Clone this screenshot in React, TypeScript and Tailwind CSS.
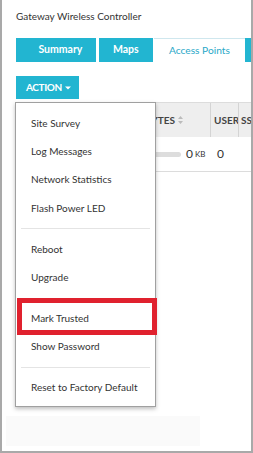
import React from 'react';

const teal = 'bg-[#22b5d1]';

const MenuItem: React.FC<{ label: string; marked?: boolean }> = ({ label, marked }) => (
  <div className="relative h-[28.4px] flex items-center pl-[15px] text-[10px] text-[#333]">
    {label}
    {marked && (
      <span className="absolute left-[1px] right-[-2px] top-[-6px] bottom-[-2px] border-[5px] border-[#e0212e]" />
    )}
  </div>
);

const Separator: React.FC = () => <div className="h-px bg-[#e4e4e4] mx-[5px] my-[5.75px]" />;

export default function App() {
  return (
    <div
      className="w-[253px] h-[453px] bg-white border-l-2 border-r-2 border-b-2 border-[#a9a9a9] overflow-hidden relative"
      style={{ fontFamily: 'Lato, "Open Sans", sans-serif' }}
    >
      <div className="pl-[14px] pt-[9px] text-[10px] text-[#333] leading-[14px]">Gateway Wireless Controller</div>

      {/* Tabs */}
      <div className="flex items-stretch mt-[15px] ml-[14px] h-[24px]">
        <div className={`${teal} w-[81px] flex items-center justify-center pl-[9px] text-white font-bold text-[10.5px]`}>
          Summary
        </div>
        <div className={`${teal} w-[55px] ml-[3px] flex items-center justify-center text-white font-bold text-[10.5px]`}>
          Maps
        </div>
        <div className="w-[93px] ml-[1px] flex items-center justify-center border-t border-[#cfe7ee] text-[#2aa8c8] text-[10.2px]">
          Access Points
        </div>
        <div className={`${teal} w-[6px]`} />
      </div>

      {/* Action button */}
      <div className="ml-[14px] mt-[14px]">
        <div className={`${teal} w-[63px] h-[23px] flex items-center pl-[10px] text-white font-bold text-[10px] tracking-[-0.4px]`}>
          ACTION
          <svg width="6" height="4" viewBox="0 0 6 4" className="ml-[3px]">
            <path d="M0 0.5h6L3 3.5z" fill="#fff" />
          </svg>
        </div>
      </div>

      {/* Table behind menu */}
      <div className="ml-[14px] mt-[3px] w-[260px] text-[10px]">
        <div className="flex h-[35px] bg-[#eeeeee] border-t border-[#dcdcdc] text-[#444] font-bold">
          <div className="w-[123px]" />
          <div className="w-[72px] flex items-center gap-[3px] pl-[6px] border-r border-[#d4d4d4]">
            BYTES
            <svg width="5" height="8" viewBox="0 0 5 8">
              <path d="M2.5 0L5 3H0z M2.5 8L0 5h5z" fill="#bbb" />
            </svg>
          </div>
          <div className="w-[28px] flex items-center pl-[3px] border-r border-[#d4d4d4] overflow-hidden whitespace-nowrap">USER</div>
          <div className="w-[16px] flex items-center pl-[2px] overflow-hidden whitespace-nowrap">SS</div>
        </div>
        <div className="flex h-[35px] border-b border-[#dcdcdc] text-[#333] text-[12px]">
          <div className="w-[123px]" />
          <div className="w-[72px] flex items-center">
            <div className="w-[42px] h-[5px] rounded-full bg-[#dddddd]" />
            <span className="ml-[5px]">0</span>
            <span className="ml-[2px] text-[8px]">KB</span>
          </div>
          <div className="w-[28px] flex items-center pl-[6px]">0</div>
        </div>
      </div>

      <div className="ml-[4px] mt-[244px] w-[194px] h-[30px] bg-[#fafafa]" />

      {/* Dropdown menu */}
      <div className="absolute left-[13px] top-[102px] w-[141px] bg-white border border-[#a0a0a0] shadow-[0_2px_4px_rgba(0,0,0,0.25)] pt-[6px] pb-[4px]">
        <MenuItem label="Site Survey" />
        <MenuItem label="Log Messages" />
        <MenuItem label="Network Statistics" />
        <MenuItem label="Flash Power LED" />
        <Separator />
        <MenuItem label="Reboot" />
        <MenuItem label="Upgrade" />
        <Separator />
        <MenuItem label="Mark Trusted" marked />
        <MenuItem label="Show Password" />
        <Separator />
        <MenuItem label="Reset to Factory Default" />
      </div>
    </div>
  );
}
